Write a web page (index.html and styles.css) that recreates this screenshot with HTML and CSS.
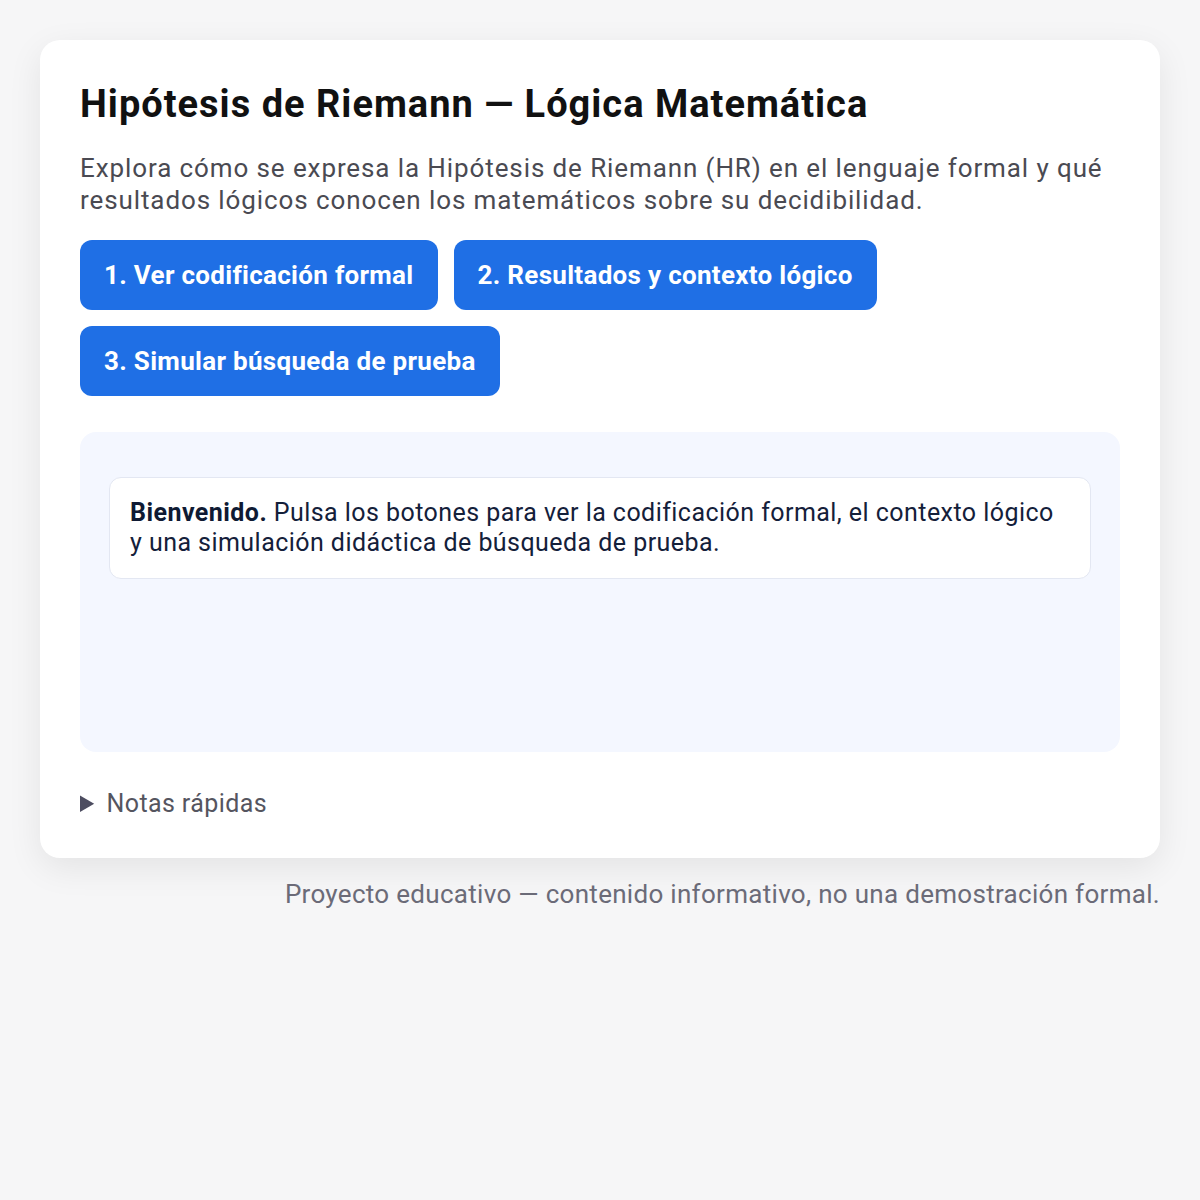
FILE: index.html
```html
<!DOCTYPE html>
<html lang="es">
<head>
  <meta charset="UTF-8" />
  <meta name="viewport" content="width=device-width, initial-scale=1" />
  <title>Hipótesis de Riemann — Lógica Matemática</title>
  <link rel="stylesheet" href="styles.css">
</head>
<body>

  <main class="wrap">
    <section class="card">
      <h1>Hipótesis de Riemann — Lógica Matemática</h1>
      <p class="lead">Explora cómo se expresa la Hipótesis de Riemann (HR) en el lenguaje formal y qué resultados lógicos conocen los matemáticos sobre su decidibilidad.</p>

      <div class="actions">
        <button class="btn">1. Ver codificación formal</button>
        <button class="btn">2. Resultados y contexto lógico</button>
        <button class="btn">3. Simular búsqueda de prueba</button>
      </div>

      <div class="output">
        <div class="msg"><strong>Bienvenido.</strong> Pulsa los botones para ver la codificación formal, el contexto lógico y una simulación didáctica de búsqueda de prueba.</div>
      </div>

      <details class="notes">
        <summary>Notas rápidas</summary>
        <p>La HR puede escribirse como un enunciado aritmético Π₁.</p>
      </details>
    </section>

    <footer class="foot">Proyecto educativo — contenido informativo, no una demostración formal.</footer>
  </main>

</body>
</html>
```

FILE: styles.css
```css
body {
  margin: 0;
  background: #f6f6f7;
  font-family: Roboto, "Noto Sans", sans-serif;
  color: #111;
}

.wrap {
  padding: 40px;
}

.card {
  background: #fff;
  border-radius: 20px;
  padding: 40px 40px 38px;
  box-shadow: 0 10px 34px rgba(0, 0, 0, 0.08);
}

h1 {
  margin: 0 0 24px;
  font-size: 38px;
  line-height: 48px;
  letter-spacing: 1px;
  font-weight: 700;
  color: #111;
}

.lead {
  margin: 0 0 24px;
  font-size: 26px;
  line-height: 32px;
  letter-spacing: 0.9px;
  color: #4a4a52;
}

.actions {
  display: flex;
  flex-wrap: wrap;
  gap: 16px;
  margin-bottom: 36px;
}

.btn {
  border: none;
  background: #1f6fe5;
  color: #fff;
  font-family: inherit;
  font-size: 26px;
  letter-spacing: 0.3px;
  font-weight: 700;
  padding: 0 24px;
  height: 70px;
  border-radius: 12px;
  cursor: pointer;
}

.btn:hover {
  background: #1a5fc7;
}

.output {
  background: #f4f7ff;
  border-radius: 16px;
  padding: 45px 29px 28px;
  height: 320px;
  box-sizing: border-box;
}

.msg {
  background: #fff;
  border: 1px solid #e3e7f2;
  border-radius: 12px;
  padding: 20px;
  font-size: 25px;
  line-height: 30px;
  letter-spacing: 0.45px;
  color: #14203a;
}

.msg strong {
  color: #0f1a33;
}

.notes {
  margin-top: 36px;
  font-size: 25px;
  line-height: 32px;
  letter-spacing: 0.4px;
  color: #55555f;
}

.notes summary {
  cursor: pointer;
}

.notes summary::marker {
  color: #4d4d60;
}

.notes p {
  margin: 12px 0 0;
}

.foot {
  margin-top: 20px;
  text-align: right;
  font-size: 26px;
  line-height: 32px;
  letter-spacing: 0.3px;
  color: #6b6b78;
}
```
